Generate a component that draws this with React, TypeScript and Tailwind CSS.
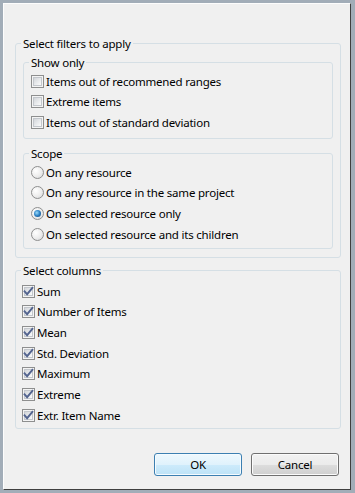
import React from "react";

function CheckBox({ checked }: { checked?: boolean }) {
  return (
    <span className="relative block w-[13px] h-[13px] shrink-0 border border-[#8e8f8f] bg-[#f4f4f4] p-[1px]">
      <span className="block w-full h-full border border-[#c3c7cc] bg-[linear-gradient(135deg,#d3d6da_0%,#e9ebed_55%,#fbfbfb_100%)]" />
      {checked && (
        <svg className="absolute left-[0px] top-[0px]" width="11" height="11" viewBox="0 0 11 11">
          <path d="M1.6 5.4 L4.1 8.2 L9.4 1.8" fill="none" stroke="#53648f" strokeWidth="1.9" strokeLinecap="square" />
        </svg>
      )}
    </span>
  );
}

function Radio({ checked }: { checked?: boolean }) {
  return (
    <span className="flex w-[13px] h-[13px] shrink-0 items-center justify-center rounded-full border border-[#8e8f8f] bg-[radial-gradient(circle_at_35%_35%,#ffffff_0%,#ececec_55%,#cfd1d4_100%)]">
      {checked && (
        <span className="block w-[7px] h-[7px] rounded-full bg-[radial-gradient(circle_at_40%_40%,#9bdcfb_0%,#2b80c4_50%,#11406f_100%)]" />
      )}
    </span>
  );
}

function Row({ control, label }: { control: React.ReactNode; label: string }) {
  return (
    <div className="h-[20.67px] flex items-center">
      {control}
      <span className="ml-[2px] leading-[15px] whitespace-nowrap">{label}</span>
    </div>
  );
}

export default function App() {
  return (
    <div className="w-[355px] h-[493px] bg-[#a2adb8] pt-[3px] pl-[3px] pr-[4px] pb-[3px] font-['Noto_Sans',sans-serif] text-[11.5px] tracking-[-0.2px] text-black">
      <div className="h-full flex flex-col bg-[#f0f0f0] border border-t-[#fdfdfd] border-l-[#fdfdfd] border-r-[#3f3f3f] border-b-[#3f3f3f]">
        <fieldset className="mt-[32px] ml-[11px] w-[326px] border border-[#d5dfe5] rounded-[3px] px-[7px] pb-[8px]">
          <legend className="-ml-[2px] px-[2px] leading-[15px]">Select filters to apply</legend>
          <fieldset className="mt-[4px] border border-[#d5dfe5] rounded-[3px] px-[7px] pb-[5px]">
            <legend className="-ml-[2px] px-[2px] leading-[15px]">Show only</legend>
            <div className="pt-[1px]">
              <Row control={<CheckBox />} label="Items out of recommened ranges" />
              <Row control={<CheckBox />} label="Extreme items" />
              <Row control={<CheckBox />} label="Items out of standard deviation" />
            </div>
          </fieldset>
          <fieldset className="mt-[7px] border border-[#d5dfe5] rounded-[3px] px-[7px] pb-[3.33px]">
            <legend className="-ml-[2px] px-[2px] leading-[15px]">Scope</legend>
            <div className="pt-[1px]">
              <Row control={<Radio />} label="On any resource" />
              <Row control={<Radio />} label="On any resource in the same project" />
              <Row control={<Radio checked />} label="On selected resource only" />
              <Row control={<Radio />} label="On selected resource and its children" />
            </div>
          </fieldset>
        </fieldset>
        <fieldset className="mt-[5px] ml-[11px] w-[326px] border border-[#d5dfe5] rounded-[3px] px-[6px] pb-[2.33px]">
          <legend className="-ml-[1px] px-[2px] leading-[15px]">Select columns</legend>
          <div className="pt-[3px]">
            <Row control={<CheckBox checked />} label="Sum" />
            <Row control={<CheckBox checked />} label="Number of Items" />
            <Row control={<CheckBox checked />} label="Mean" />
            <Row control={<CheckBox checked />} label="Std. Deviation" />
            <Row control={<CheckBox checked />} label="Maximum" />
            <Row control={<CheckBox checked />} label="Extreme" />
            <Row control={<CheckBox checked />} label="Extr. Item Name" />
          </div>
        </fieldset>
        <div className="mt-[24px] flex justify-end gap-[9px] pr-[11px]">
          <button className="w-[88px] h-[23px] rounded-[3px] border border-[#3c7fb1] shadow-[inset_0_0_0_1px_#f4fbff] bg-[linear-gradient(to_bottom,#eef8fd_0%,#e0f2fc_50%,#cdebfb_51%,#bde2f6_100%)] text-[11.5px] leading-[15px]">
            OK
          </button>
          <button className="w-[88px] h-[23px] rounded-[3px] border border-[#707070] shadow-[inset_0_0_0_1px_#fbfbfb] bg-[linear-gradient(to_bottom,#f2f2f2_0%,#ebebeb_50%,#dddddd_51%,#cfcfcf_100%)] text-[11.5px] leading-[15px]">
            Cancel
          </button>
        </div>
      </div>
    </div>
  );
}
